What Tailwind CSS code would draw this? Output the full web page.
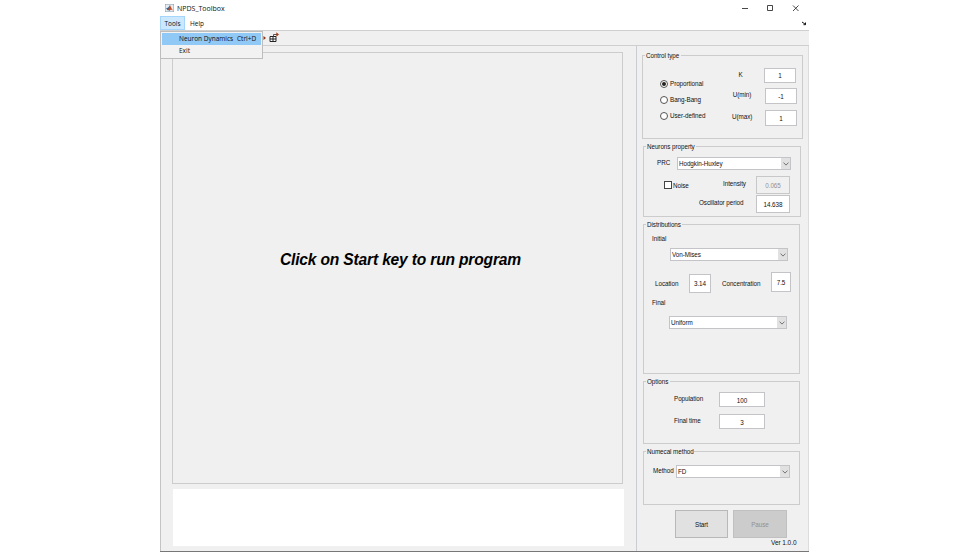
<!DOCTYPE html>
<html lang="en">
<head>
<meta charset="utf-8">
<title>NPDS_Toolbox</title>
<script src="https://cdn.jsdelivr.net/npm/@tailwindcss/browser@4"></script>
</head>
<body class="bg-white">
<div class="relative ml-[160px] flex h-[552px] w-[649px] flex-col overflow-hidden border-b border-[#777] bg-white font-['Liberation_Sans',Arial,sans-serif] text-[6.3px] leading-[8px] tracking-[-0.06px] whitespace-nowrap text-[#111]">
  <!-- title bar -->
  <header class="flex h-[16px] shrink-0 items-center font-['Open_Sans',sans-serif] text-[7px] tracking-normal">
    <svg class="ml-[5px] h-[8px] w-[9px]" viewBox="0 0 9 8"><rect x=".3" y=".3" width="8.4" height="7.4" fill="#e4edf4" stroke="#8fa3b5" stroke-width=".6"/><path d="M1 4.6 3.2 3.4 5 1.2 4.3 5.8 3 6.4Z" fill="#28689a"/><path d="M5 1 6.3 4 8 6.4 6 5.6 4.2 7 3.2 5.2Z" fill="#c84a1c"/></svg>
    <span class="ml-[3px] w-[560px] pt-px">NPDS_Toolbox</span>
    <svg class="ml-[5px] h-[9px] w-[58px]" viewBox="0 0 58 9" fill="none" stroke="#333" stroke-width=".9"><path d="M0 4.500H6M25.500 1.500H30.500V6.500H25.500ZM51 1.500l5.500 5.500M56.500 1.500 51 7"/></svg>
  </header>
  <!-- menu bar -->
  <nav class="flex h-[15px] shrink-0 items-start border-b border-[#cfcfcf] font-['Open_Sans',sans-serif] text-[6.5px] tracking-normal">
    <span class="flex h-[14px] w-[25px] items-center justify-center border border-[#a5d5fa] bg-[#cce8ff] pt-px">Tools</span>
    <span class="ml-[5px] leading-[15px]">Help</span>
    <svg class="mt-[5px] ml-auto mr-[2px] h-[5px] w-[6px]" viewBox="0 0 6 5" fill="none" stroke="#111" stroke-width="1"><path d="M1 1 4.500 3.400M4.500 1.500V3.700H2.500"/></svg>
  </nav>
  <!-- tool bar -->
  <div class="flex h-[15px] shrink-0 items-center border-b border-[#cfcfcf] bg-[#f0f0f0]">
    <svg class="ml-[103px] h-[12px] w-[18px]" viewBox="0 0 18 12"><path d="M.5 4 3 6 .5 8Z" fill="#8b3515"/><path d="M7 4.500h6v5H7zM10 4.500v5M7 7h6" fill="#fff" stroke="#222"/><path d="M10.500 4.500V2.500H14" fill="none" stroke="#444" stroke-width=".9"/><path d="M13.300 .3 16 2.500 13.300 4.700Z" fill="#a33b18"/></svg>
  </div>
  <main class="flex min-h-0 flex-1 border-x border-l-[#c4c4c4] border-r-[#dcdcdc] bg-[#f0f0f0]">
    <section class="w-[475px] shrink-0 pt-[6px] pl-[11px]">
      <div class="flex h-[432px] w-[451px] items-center justify-center border border-[#cccccc] pb-[16px] pl-[6px] text-[15.6px] leading-[20px] font-bold tracking-[-0.18px] text-black italic">Click on Start key to run program</div>
      <div class="mt-[5px] ml-px h-[57px] w-[451px] bg-white"></div>
    </section>
    <aside class="w-[172px] border-l border-[#cbcbd2] pl-[5px]">
      <!-- control type -->
      <div class="mt-[9px] h-[84px] w-[161px] border border-[#cccccc]">
        <h2 class="-mt-[4px] ml-[2px] w-[36px] bg-[#f0f0f0] pl-px">Control type</h2>
        <div class="flex">
          <div class="mt-[19px] ml-[17px] flex w-[72px] flex-col gap-[8px]">
            <div class="flex items-center gap-[2px]"><i class="flex size-[8px] items-center justify-center rounded-full border border-[#555] bg-white"><i class="size-[4px] rounded-full bg-[#222]"></i></i><span class="pt-px">Proportional</span></div>
            <div class="-mt-px flex items-center gap-[2px]"><i class="size-[8px] rounded-full border border-[#555] bg-white"></i><span class="pt-px">Bang-Bang</span></div>
            <div class="-mt-px flex items-center gap-[2px]"><i class="size-[8px] rounded-full border border-[#555] bg-white"></i><span class="pt-px">User-defined</span></div>
          </div>
          <div class="mt-[11px] w-[20px] text-center">
            <p class="mr-[3px]">K</p><p class="mt-[12px]">U(min)</p><p class="mt-[14px]">U(max)</p>
          </div>
          <div class="mt-[8px] ml-[12px] text-center leading-[14px]">
            <p class="h-[15px] w-[32px] border border-[#c4c4c8] bg-white">1</p>
            <p class="mt-[5px] ml-px h-[16px] w-[32px] border border-[#c4c4c8] bg-white leading-[16px]">-1</p>
            <p class="mt-[6px] ml-px h-[16px] w-[32px] border border-[#c4c4c8] bg-white leading-[16px]">1</p>
          </div>
        </div>
      </div>
      <!-- neurons property -->
      <div class="mt-[7px] ml-px h-[71px] w-[158px] border border-[#cccccc]">
        <h2 class="-mt-[4px] ml-[2px] w-[50px] bg-[#f0f0f0] pl-px">Neurons property</h2>
        <div class="mt-[6px] flex h-[13px]">
          <span class="mt-[2px] ml-[13px] w-[20px]">PRC</span>
          <div class="flex h-[13px] w-[114px] items-center border border-[#c4c4c8] bg-white pl-px"><span class="flex-1 pt-px">Hodgkin-Huxley</span><i class="flex h-full w-[9px] items-center justify-center bg-[#e1e1e1]"><svg class="h-[4px] w-[6px]" viewBox="0 0 6 4"><path d="M.5.600 3 3.100 5.500.6" fill="none" stroke="#555" stroke-width=".8"/></svg></i></div>
        </div>
        <div class="mt-[6px] flex h-[19px]">
          <i class="mt-[5px] ml-[20px] size-[8px] border border-[#444] bg-white"></i>
          <span class="mt-[6px] ml-px w-[50px]">Noise</span>
          <span class="mt-[4px] w-[33px]">Intensity</span>
          <span class="h-[18px] w-[34px] border border-[#c8c8c8] text-center leading-[17px] text-[#929292]">0.065</span>
        </div>
        <div class="flex">
          <span class="mt-[4px] ml-[55px] w-[57px]">Oscillator period</span>
          <span class="h-[18px] w-[34px] border border-[#c4c4c8] bg-white text-center leading-[17px]">14.638</span>
        </div>
      </div>
      <!-- distributions -->
      <div class="mt-[7px] ml-px h-[150px] w-[157px] border border-[#cccccc]">
        <h2 class="-mt-[4px] ml-[2px] w-[36px] bg-[#f0f0f0] pl-px">Distributions</h2>
        <p class="mt-[6px] ml-[8px]">Initial</p>
        <div class="mt-[5px] ml-[26px] flex h-[13px] w-[118px] items-center border border-[#c4c4c8] bg-white pl-px"><span class="flex-1 pt-px">Von-Mises</span><i class="flex h-full w-[9px] items-center justify-center bg-[#e1e1e1]"><svg class="h-[4px] w-[6px]" viewBox="0 0 6 4"><path d="M.5.600 3 3.100 5.500.6" fill="none" stroke="#555" stroke-width=".8"/></svg></i></div>
        <div class="mt-[11px] flex h-[21px]">
          <span class="mt-[8px] ml-[11px] w-[34px]">Location</span>
          <span class="mt-[2px] h-[19px] w-[22px] border border-[#c4c4c8] bg-white text-center leading-[18px]">3.14</span>
          <span class="mt-[8px] ml-[11px] w-[49px]">Concentration</span>
          <span class="h-[20px] w-[20px] border border-[#c4c4c8] bg-white text-center leading-[19px]">7.5</span>
        </div>
        <p class="mt-[6px] ml-[8px]">Final</p>
        <div class="mt-[9px] ml-[25px] flex h-[13px] w-[118px] items-center border border-[#c4c4c8] bg-white pl-px"><span class="flex-1 pt-px">Uniform</span><i class="flex h-full w-[9px] items-center justify-center bg-[#e1e1e1]"><svg class="h-[4px] w-[6px]" viewBox="0 0 6 4"><path d="M.5.600 3 3.100 5.500.6" fill="none" stroke="#555" stroke-width=".8"/></svg></i></div>
      </div>
      <!-- options -->
      <div class="mt-[7px] ml-px h-[63px] w-[157px] border border-[#cccccc]">
        <h2 class="-mt-[4px] ml-[2px] w-[24px] bg-[#f0f0f0] pl-px">Options</h2>
        <div class="mt-[6px] flex h-[15px]"><span class="mt-[3px] ml-[30px] w-[45px]">Population</span><span class="h-[15px] w-[46px] border border-[#c4c4c8] bg-white text-center leading-[15px]">100</span></div>
        <div class="mt-[7px] flex h-[15px]"><span class="mt-[3px] ml-[30px] w-[45px]">Final time</span><span class="h-[15px] w-[46px] border border-[#c4c4c8] bg-white text-center leading-[15px]">3</span></div>
      </div>
      <!-- numerical method -->
      <div class="mt-[7px] ml-px h-[54px] w-[157px] border border-[#cccccc]">
        <h2 class="-mt-[4px] ml-[2px] w-[48px] bg-[#f0f0f0] pl-px">Numecal method</h2>
        <div class="mt-[9px] flex"><span class="mt-[2px] ml-[9px] w-[23px]">Method</span>
          <div class="flex h-[13px] w-[114px] items-center border border-[#c4c4c8] bg-white pl-px"><span class="flex-1 pt-px">FD</span><i class="flex h-full w-[9px] items-center justify-center bg-[#e1e1e1]"><svg class="h-[4px] w-[6px]" viewBox="0 0 6 4"><path d="M.5.600 3 3.100 5.500.6" fill="none" stroke="#555" stroke-width=".8"/></svg></i></div>
        </div>
      </div>
      <div class="mt-[5px] ml-[33px] flex gap-[5px]">
        <span class="h-[28px] w-[53px] border border-[#b8b8b8] bg-[#e1e1e1] text-center leading-[27px]">Start</span>
        <span class="h-[28px] w-[54px] border border-[#c0c0c0] bg-[#cccccc] text-center leading-[27px] text-[#929292]">Pause</span>
      </div>
      <p class="mt-px ml-[129px] text-[6.5px]">Ver 1.0.0</p>
    </aside>
  </main>
  <!-- open menu -->
  <div class="absolute top-[31px] left-0 h-[28px] w-[103px] border border-[#bdbdbd] bg-[#f2f2f2] p-px font-['Open_Sans',sans-serif] text-[6.5px] tracking-normal">
    <div class="flex h-[12px] items-center bg-[#90c8f6] pl-[17px]"><span class="w-[58px]">Neuron Dynamics</span><span>Ctrl+D</span></div>
    <div class="flex h-[12px] items-center pl-[17px]">Exit</div>
  </div>
</div>
</body>
</html>
